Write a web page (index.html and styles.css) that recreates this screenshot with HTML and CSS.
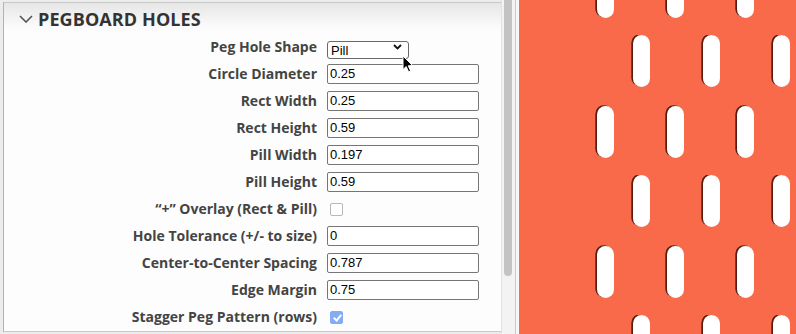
FILE: index.html
```html
<!DOCTYPE html>
<html>
<head>
    <meta charset="utf-8">
    <title>Pegboard Holes</title>
    <link rel="stylesheet" href="styles.css">
</head>
<body>
    <div class="app">
        <div class="sidebar">
            <div class="panel">
                <div class="panel-head">
                    <svg class="chev" width="14" height="8" viewBox="0 0 14 8"><polyline points="1,1 7,7 13,1" fill="none" stroke="#555" stroke-width="1.6"/></svg>
                    <span class="title">PEGBOARD HOLES</span>
                </div>
                <div class="fields">
                    <label>Peg Hole Shape</label>
                    <div class="select-wrap">
                        <select><option>Pill</option><option>Circle</option><option>Rect</option></select>
                        <svg class="sel-arrow" width="9" height="6" viewBox="0 0 9 6"><polyline points="1,1 4.5,4.5 8,1" fill="none" stroke="#111" stroke-width="1.8"/></svg>
                    </div>

                    <label>Circle Diameter</label>
                    <input type="text" value="0.25">

                    <label>Rect Width</label>
                    <input type="text" value="0.25">

                    <label>Rect Height</label>
                    <input type="text" value="0.59">

                    <label>Pill Width</label>
                    <input type="text" value="0.197">

                    <label>Pill Height</label>
                    <input type="text" value="0.59">

                    <label>“+” Overlay (Rect &amp; Pill)</label>
                    <div><input type="checkbox" class="check"></div>

                    <label>Hole Tolerance (+/- to size)</label>
                    <input type="text" value="0">

                    <label>Center-to-Center Spacing</label>
                    <input type="text" value="0.787">

                    <label>Edge Margin</label>
                    <input type="text" value="0.75">

                    <label>Stagger Peg Pattern (rows)</label>
                    <div><input type="checkbox" class="check" checked></div>
                </div>
            </div>
            <div class="scrollbar"><div class="thumb"></div></div>
            <div class="gutter"></div>
        </div>
        <div class="preview">
            <svg width="277" height="334" viewBox="0 0 277 334">
                <defs>
                    <pattern id="holes" x="74" y="35" width="70" height="140" patternUnits="userSpaceOnUse">
                        <rect x="2.3" y="70.3" width="17" height="52" rx="8.5" fill="#5a1c10"/>
                        <rect x="4" y="71" width="17" height="52" rx="8.5" fill="#fff"/>
                        <rect x="38.3" y="-0.7" width="17" height="52" rx="8.5" fill="#5a1c10"/>
                        <rect x="40" y="0" width="17" height="52" rx="8.5" fill="#fff"/>
                    </pattern>
                </defs>
                <rect x="74" y="0" width="203" height="334" fill="url(#holes)"/>
            </svg>
        </div>
        <svg class="cursor" width="12" height="18" viewBox="0 0 12 18">
            <path d="M1 1 L1 14.5 L4.2 11.5 L6.6 16.8 L8.6 15.9 L6.3 10.8 L10.6 10.6 Z" fill="#000" stroke="#fff" stroke-width="1"/>
        </svg>
    </div>
</body>
</html>
```

FILE: styles.css
```css
html, body {
    margin: 0;
    padding: 0;
}

body {
    background-color: #fff;
    font-family: "Open Sans", "Liberation Sans", sans-serif;
}

.app {
    position: relative;
    display: flex;
    width: 796px;
    height: 334px;
    overflow: hidden;
}

.sidebar {
    display: flex;
    width: 519px;
    height: 334px;
    background-color: #ececec;
}

.panel {
    width: 497px;
    height: 328px;
    margin-left: 3px;
    margin-top: 2px;
    background-color: #fdfdfd;
    border-left: 1px solid #b3b3b3;
    border-top: 1px solid #c8c8c8;
    border-bottom: 1px solid #c8c8c8;
    overflow: hidden;
}

.panel-head {
    display: flex;
    align-items: center;
    height: 30px;
    padding-left: 15px;
    background: linear-gradient(#e6e6e6, #fbfbfb 80%, #fdfdfd);
}

.chev {
    margin-right: 5px;
    margin-top: 2px;
}

.title {
    font-size: 18px;
    font-weight: 700;
    color: #333;
    letter-spacing: 0.1px;
    margin-top: 1px;
}

.fields {
    display: grid;
    grid-template-columns: 313px 152px;
    grid-auto-rows: 27px;
    column-gap: 10px;
    align-items: center;
}

.fields label {
    text-align: right;
    font-size: 14px;
    font-weight: 700;
    color: #444;
}

.fields input[type="text"] {
    box-sizing: border-box;
    width: 152px;
    height: 20px;
    margin: 0;
    padding: 0 2px;
    border: 1px solid #767676;
    border-radius: 2px;
    font-family: "Liberation Sans", Arial, sans-serif;
    font-size: 13px;
    color: #000;
    background-color: #fff;
}

.select-wrap {
    position: relative;
    width: 82px;
    height: 18px;
}

.select-wrap select {
    appearance: none;
    -webkit-appearance: none;
    box-sizing: border-box;
    width: 82px;
    height: 18px;
    margin: 0;
    padding: 0 3px;
    border: 1px solid #6a6a6a;
    border-radius: 3px;
    background-color: #fff;
    font-family: "Liberation Sans", Arial, sans-serif;
    font-size: 13px;
    color: #000;
}

.sel-arrow {
    position: absolute;
    right: 7px;
    top: 6px;
    pointer-events: none;
}

.check {
    appearance: none;
    -webkit-appearance: none;
    box-sizing: border-box;
    width: 13px;
    height: 13px;
    margin: 1px 0 0 3px;
    border: 1px solid #b8b8b8;
    border-radius: 2px;
    background-color: #fff;
    position: relative;
    display: block;
}

.check:checked {
    background-color: #84acf4;
    border-color: #84acf4;
}

.check:checked::after {
    content: "";
    position: absolute;
    left: 3.5px;
    top: 1px;
    width: 3px;
    height: 6px;
    border-right: 2px solid #fff;
    border-bottom: 2px solid #fff;
    transform: rotate(40deg);
}

.scrollbar {
    width: 13px;
    height: 334px;
    background-color: #f3f3f3;
    border-left: 1px solid #e2e2e2;
    border-right: 1px solid #c9c9c9;
}

.thumb {
    width: 8px;
    height: 276px;
    margin-left: 2px;
    background-color: #c3c3c3;
    border-radius: 0 0 4px 4px;
}

.gutter {
    width: 3px;
    height: 334px;
    background-color: #f6f6f6;
}

.preview {
    width: 277px;
    height: 334px;
    background-color: #f96a4a;
}

.preview svg {
    display: block;
}

.cursor {
    position: absolute;
    left: 402px;
    top: 55px;
}
```
